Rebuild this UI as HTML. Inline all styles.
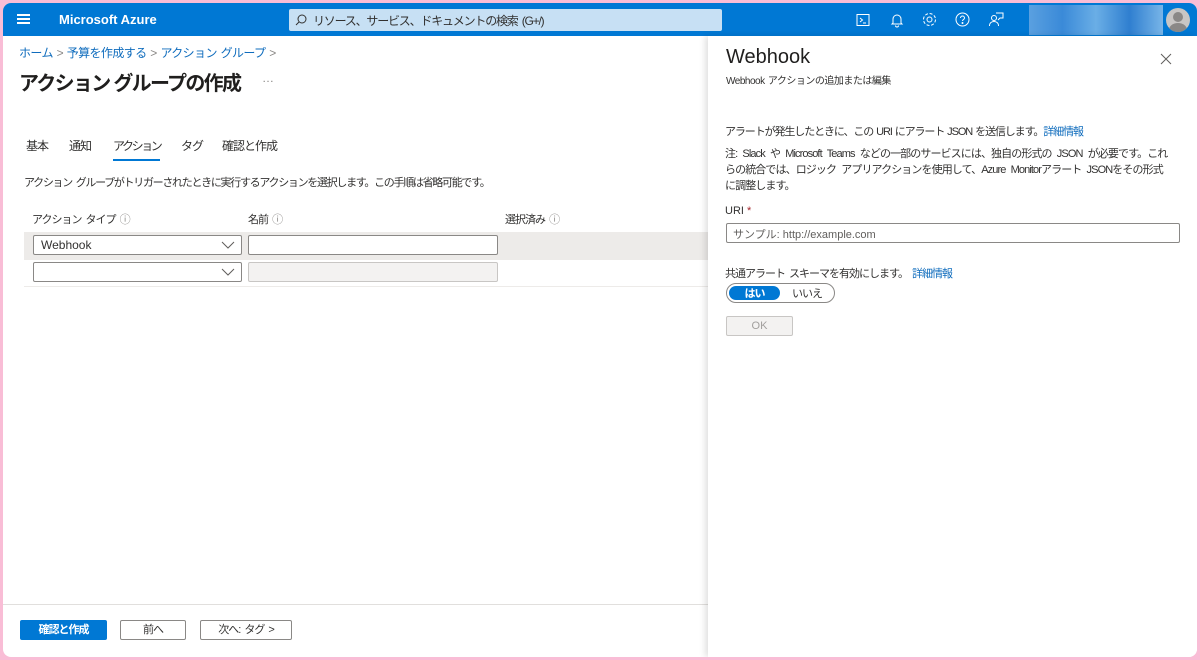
<!DOCTYPE html>
<html><head><meta charset="utf-8"><style>
*{box-sizing:border-box;margin:0;padding:0}
body{width:1200px;height:660px;background:#f9bdd6;font-family:"Liberation Sans","Noto Sans CJK JP",sans-serif;color:#323130;overflow:hidden;position:relative;letter-spacing:-1px}
#frame{position:absolute;left:3px;top:3px;width:1194px;height:654px;background:#fff;border-radius:8px;overflow:hidden}
#hdr{position:absolute;left:0;top:0;width:1194px;height:33px;background:#0078d4;color:#fff}
.abs{position:absolute}
.link{color:#0f6cbd}
.sel{position:absolute;height:20px;border:1px solid #8a8886;border-radius:2px;background:#fff;font-size:12px;padding:2px 7px;letter-spacing:0}
.btn{position:absolute;height:20px;border:1px solid #8a8886;border-radius:2px;background:#fff;font-size:11px;text-align:center;line-height:18px}
</style></head><body>
<div id="frame">
<div id="hdr">
 <div class="abs" style="left:14px;top:11px;width:13px;height:2px;background:#fff;box-shadow:0 4px 0 #fff,0 8px 0 #fff"></div>
 <div class="abs" style="left:56px;top:9px;font-size:13px;font-weight:bold;letter-spacing:0">Microsoft Azure</div>
 <div class="abs" style="left:286px;top:6px;width:433px;height:22px;background:#c7e0f4;border-radius:2px;color:#323130;font-size:12px;padding:3px 0 0 24px;letter-spacing:-1.2px;word-spacing:2px">リソース、サービス、ドキュメントの検索 (G+/)</div>
 <svg class="abs" style="left:292px;top:11px" width="12" height="12"><circle cx="7" cy="5" r="4" fill="none" stroke="#323130"/><line x1="4" y1="8" x2="1" y2="11" stroke="#323130"/></svg>
 <svg class="abs" style="left:852px;top:9px" width="16" height="16" fill="none" stroke="#fff"><rect x="2" y="2.5" width="12" height="11"/><path d="M5 6l2.5 2L5 10M8 11h3"/></svg>
 <svg class="abs" style="left:886px;top:9px" width="16" height="16" fill="none" stroke="#fff"><path d="M4 11V7a4 4 0 018 0v4l1 1H3zM6.5 13.5a1.5 1.5 0 003 0"/></svg>
 <svg class="abs" style="left:918px;top:8px" width="17" height="17" fill="none" stroke="#fff"><circle cx="8.5" cy="8.5" r="2.5"/><circle cx="8.5" cy="8.5" r="6" stroke-dasharray="3 1.7"/></svg>
 <svg class="abs" style="left:951px;top:8px" width="17" height="17" fill="none" stroke="#fff"><circle cx="8.5" cy="8.5" r="6.5"/><path d="M6.5 7a2 2 0 114 0c0 1.5-2 1.5-2 3"/><circle cx="8.5" cy="12" r=".5"/></svg>
 <svg class="abs" style="left:985px;top:8px" width="17" height="17" fill="none" stroke="#fff"><circle cx="6" cy="7" r="2.5"/><path d="M1.5 15c0-3 2-4.5 4.5-4.5S10.5 12 10.5 15M8 2h7v5h-3l-2 2"/></svg>
 <div class="abs" style="left:1026px;top:2px;width:134px;height:30px;background:linear-gradient(90deg,#5aa0e0,#3a8ad8,#6aaee6,#2f7fd0,#78b5e8)"></div>
 <div class="abs" style="left:1163px;top:5px;width:24px;height:24px;border-radius:50%;background:#c8c6c4;overflow:hidden"><div class="abs" style="left:7px;top:4px;width:10px;height:10px;border-radius:50%;background:#8a8886"></div><div class="abs" style="left:3px;top:15px;width:18px;height:14px;border-radius:50%;background:#8a8886"></div></div>
</div>
<div class="abs" style="left:16px;top:41px;font-size:12px;letter-spacing:-0.6px;word-spacing:1px"><span class="link">ホーム</span> <span style="color:#8a8886">&gt;</span> <span class="link">予算を作成する</span> <span style="color:#8a8886">&gt;</span> <span class="link">アクション グループ</span> <span style="color:#8a8886">&gt;</span></div>
<div class="abs" style="left:16px;top:64px;font-size:20px;font-weight:bold;color:#201f1e;letter-spacing:-1.7px">アクション グループの作成</div>
<div class="abs" style="left:259px;top:68px;font-size:12px;color:#8a8886">…</div>
<div class="abs" style="left:23px;top:134px;font-size:12px">基本</div>
<div class="abs" style="left:66px;top:134px;font-size:12px">通知</div>
<div class="abs" style="left:110px;top:134px;font-size:12px;letter-spacing:-2.4px">アクション</div>
<div class="abs" style="left:110px;top:156px;width:47px;height:2px;background:#0078d4"></div>
<div class="abs" style="left:178px;top:134px;font-size:12px">タグ</div>
<div class="abs" style="left:219px;top:134px;font-size:12px">確認と作成</div>
<div class="abs" style="left:21px;top:171px;font-size:11px;letter-spacing:-1.3px;word-spacing:2px">アクション グループがトリガーされたときに実行するアクションを選択します。この手順は省略可能です。</div>
<div class="abs" style="left:29px;top:208px;font-size:11px;word-spacing:2px">アクション タイプ <span style="color:#8a8886">ⓘ</span></div>
<div class="abs" style="left:245px;top:208px;font-size:11px;word-spacing:2px">名前 <span style="color:#8a8886">ⓘ</span></div>
<div class="abs" style="left:502px;top:208px;font-size:11px;word-spacing:2px">選択済み <span style="color:#8a8886">ⓘ</span></div>
<div class="abs" style="left:21px;top:229px;width:685px;height:28px;background:#edebe9"></div>
<div class="abs" style="left:21px;top:283px;width:685px;height:1px;background:#edebe9"></div>
<div class="sel" style="left:30px;top:232px;width:209px">Webhook</div>
<div class="sel" style="left:245px;top:232px;width:250px"></div>
<div class="sel" style="left:30px;top:259px;width:209px"></div>
<div class="sel" style="left:245px;top:259px;width:250px;background:#f3f2f1;border-color:#c8c6c4"></div>
<svg class="abs" style="left:218px;top:238px" width="14" height="8"><path d="M1 1l6 6 6-6" fill="none" stroke="#605e5c"/></svg>
<svg class="abs" style="left:218px;top:265px" width="14" height="8"><path d="M1 1l6 6 6-6" fill="none" stroke="#605e5c"/></svg>
<div class="abs" style="left:0;top:601px;width:705px;height:1px;background:#e1dfdd"></div>
<div class="abs" style="left:17px;top:617px;width:87px;height:20px;background:#0078d4;border-radius:2px;color:#fff;font-size:11px;font-weight:bold;text-align:center;line-height:20px">確認と作成</div>
<div class="btn" style="left:117px;top:617px;width:66px">前へ</div>
<div class="btn" style="left:197px;top:617px;width:92px;word-spacing:2px">次へ: タグ &gt;</div>
<div class="abs" style="left:705px;top:33px;width:489px;height:621px;background:#fff;box-shadow:-3px 0 6px rgba(0,0,0,.12)">
 <div class="abs" style="left:18px;top:10px;font-size:20px;color:#201f1e;letter-spacing:0">Webhook</div>
 <div class="abs" style="left:18px;top:36px;font-size:10px;letter-spacing:-0.5px;word-spacing:1px">Webhook アクションの追加または編集</div>
 <svg class="abs" style="left:452px;top:17px" width="12" height="12"><path d="M1 1l10 10M11 1L1 11" stroke="#605e5c"/></svg>
 <div class="abs" style="left:17px;top:87px;font-size:11px;letter-spacing:-1.1px;word-spacing:1px">アラートが発生したときに、この URI にアラート JSON を送信します。<span class="link">詳細情報</span></div>
 <div class="abs" style="left:17px;top:110px;width:446px;font-size:11px;line-height:16px;letter-spacing:-0.9px;word-spacing:3px">注: Slack や Microsoft Teams などの一部のサービスには、独自の形式の JSON が必要です。これらの統合では、ロジック アプリアクションを使用して、Azure Monitorアラート JSONをその形式に調整します。</div>
 <div class="abs" style="left:17px;top:169px;font-size:11px;letter-spacing:0">URI <span style="color:#a4262c">*</span></div>
 <div class="abs" style="left:18px;top:187px;width:454px;height:20px;border:1px solid #8a8886;border-radius:2px;font-size:11px;color:#605e5c;padding:2px 6px;letter-spacing:0">サンプル: http://example.com</div>
 <div class="abs" style="left:17px;top:229px;font-size:11px;word-spacing:2px">共通アラート スキーマを有効にします。 <span class="link">詳細情報</span></div>
 <div class="abs" style="left:18px;top:247px;width:109px;height:20px;border:1px solid #8a8886;border-radius:10px"></div>
 <div class="abs" style="left:21px;top:250px;width:51px;height:14px;border-radius:7px;background:#0078d4;color:#fff;font-size:11px;font-weight:bold;text-align:center;line-height:16px">はい</div>
 <div class="abs" style="left:84px;top:249px;font-size:11px">いいえ</div>
 <div class="abs" style="left:18px;top:280px;width:67px;height:20px;border:1px solid #c8c6c4;background:#f3f2f1;border-radius:2px;font-size:11px;color:#a19f9d;text-align:center;line-height:18px;letter-spacing:0">OK</div>
</div>
</div>
</body></html>
